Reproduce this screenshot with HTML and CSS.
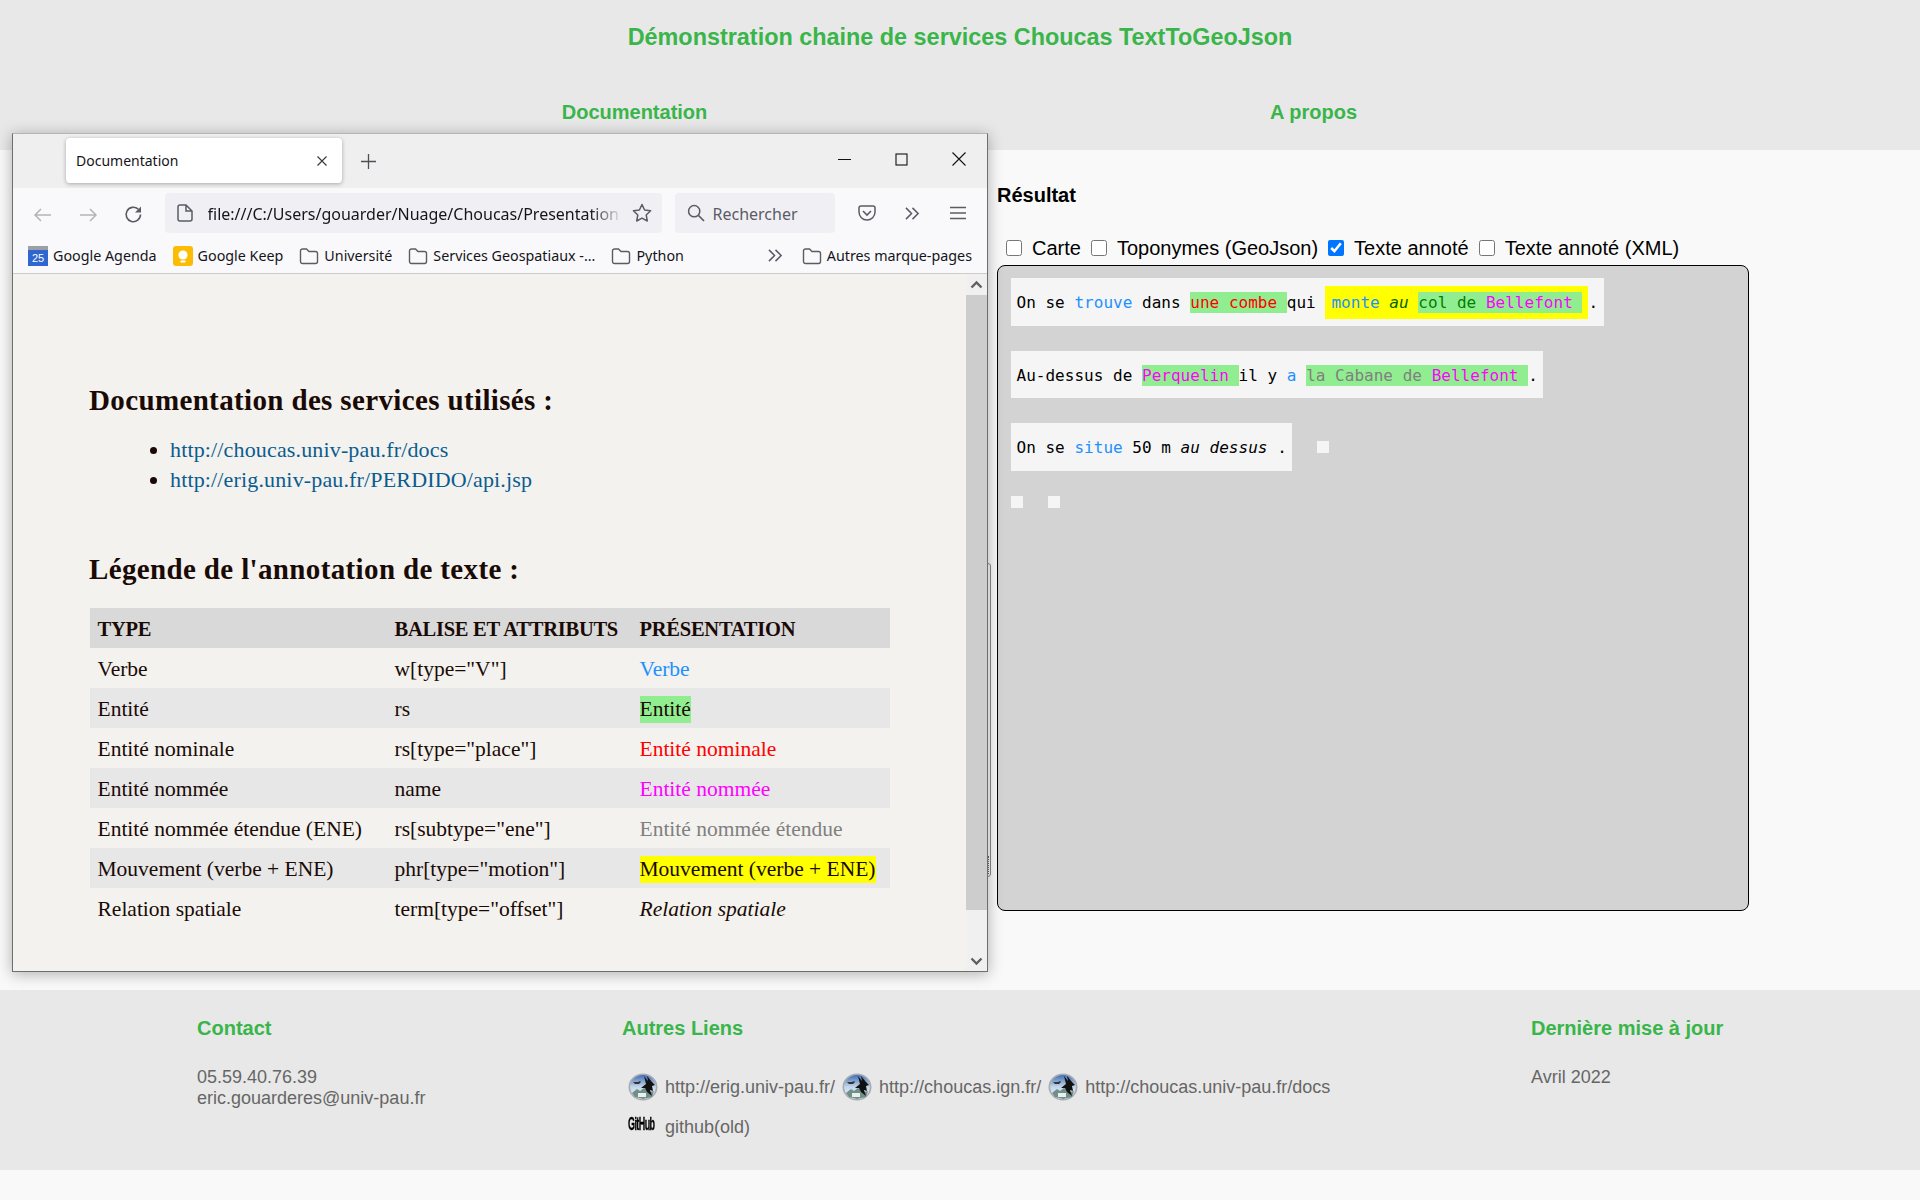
FILE: index.html
```html
<!DOCTYPE html>
<html lang="en">
<head>
    <meta charset="UTF-8">
    <meta name="viewport" content="width=device-width, initial-scale=1.0">
    <title>Démonstration chaine de services Choucas TextToGeoJson</title>
    <link rel="stylesheet" href="styles.css">
</head>
<body>
    <svg class="defs" width="0" height="0">
        <defs>
            <linearGradient id="sky" x1="0" y1="0" x2="0" y2="1">
                <stop offset="0" stop-color="#3f6fb5"/>
                <stop offset="0.5" stop-color="#c5d6ea"/>
                <stop offset="1" stop-color="#eef2f2"/>
            </linearGradient>
            <symbol id="bird-logo" viewBox="0 0 30 28">
                <ellipse cx="15" cy="14" rx="14.5" ry="13.5" fill="#a9adb3"/>
                <ellipse cx="15" cy="14" rx="12.8" ry="12" fill="url(#sky)"/>
                <path d="M4 20 L9 16 L12 18 L16 15 L22 19 L26 18 L24 24 L15 26 L7 24 Z" fill="#6f8f8a"/>
                <path d="M10 20 h8 v4 h-8 Z" fill="#eceee9"/>
                <path d="M5 9 h5 l2 -1 l1 1 l-2 2 h-4 Z" fill="#30343a"/>
                <path d="M16 3 L20 8 L19 3 L24 9 L27 12 L24 13 L25 18 L22 17 L24 23 L19 19 L17 15 L13 15 L18 11 Z" fill="#111"/>
            </symbol>
            <symbol id="folder" viewBox="0 0 20 18">
                <path d="M1.5 4 a2 2 0 0 1 2 -2 h4 l2.5 2.5 h6.5 a2 2 0 0 1 2 2 v8 a2 2 0 0 1 -2 2 h-13 a2 2 0 0 1 -2 -2 Z" fill="none" stroke="#5b5b66" stroke-width="1.4"/>
            </symbol>
            <symbol id="chevrons" viewBox="0 0 18 16">
                <path d="M2 2 L8 8 L2 14 M9 2 L15 8 L9 14" fill="none" stroke="#5b5b66" stroke-width="1.6"/>
            </symbol>
        </defs>
    </svg>

    <header class="site-header">
        <h1>Démonstration chaine de services Choucas TextToGeoJson</h1>
        <div class="site-nav">
            <a href="#">Documentation</a>
            <a href="#">A propos</a>
        </div>
    </header>

    <main class="content">
        <h2>Résultat</h2>
        <div class="options">
            <label><input type="checkbox"> Carte</label>
            <label><input type="checkbox"> Toponymes (GeoJson)</label>
            <label><input type="checkbox" checked> Texte annoté</label>
            <label><input type="checkbox"> Texte annoté (XML)</label>
        </div>
        <div class="result">
            <div class="result-row">
                <div class="sentence">On se <span class="verb">trouve</span> dans <span class="entity"><span class="nominal">une combe</span> </span>qui <span class="motion"><span class="verb">monte</span> <em class="offset-green">au</em> <span class="entity"><span class="green">col de</span> <span class="named">Bellefont</span> </span></span>.</div>
            </div>
            <div class="result-row">
                <div class="sentence sentence-short">Au-dessus de <span class="entity"><span class="named">Perquelin</span> </span>il y <span class="verb">a</span> <span class="entity"><span class="extended">la Cabane de</span> <span class="named">Bellefont</span> </span>.</div>
            </div>
            <div class="result-row">
                <div class="sentence">On se <span class="verb">situe</span> 50 m <em>au dessus</em> .</div>
                <div class="empty-box"></div>
            </div>
            <div class="result-row">
                <div class="empty-box"></div>
                <div class="empty-box"></div>
            </div>
        </div>
    </main>

    <footer class="site-footer">
        <div class="footer-contact">
            <h3>Contact</h3>
            <p>05.59.40.76.39<br>eric.gouarderes@univ-pau.fr</p>
        </div>
        <div class="footer-links">
            <h3>Autres Liens</h3>
            <div class="link-row">
                <svg class="bird"><use href="#bird-logo"/></svg>
                <a href="#">http://erig.univ-pau.fr/</a>
                <svg class="bird"><use href="#bird-logo"/></svg>
                <a href="#">http://choucas.ign.fr/</a>
                <svg class="bird"><use href="#bird-logo"/></svg>
                <a href="#">http://choucas.univ-pau.fr/docs</a>
            </div>
            <div class="link-row github-row">
                <span class="github-slot"><span class="github-logo">GitHub</span></span>
                <a href="#">github(old)</a>
            </div>
        </div>
        <div class="footer-update">
            <h3>Dernière mise à jour</h3>
            <p>Avril 2022</p>
        </div>
    </footer>

    <div class="resize-handle"></div>

    <div class="browser">
        <div class="tab-bar">
            <div class="tab">
                <span>Documentation</span>
                <svg width="10" height="10" viewBox="0 0 10 10"><path d="M0.5 0.5 L9.5 9.5 M9.5 0.5 L0.5 9.5" stroke="#3c3c42" stroke-width="1.2"/></svg>
            </div>
            <svg class="new-tab" width="15" height="15" viewBox="0 0 15 15"><path d="M7.5 0 V15 M0 7.5 H15" stroke="#4f4f57" stroke-width="1.3"/></svg>
            <div class="window-buttons">
                <svg width="13" height="13" viewBox="0 0 13 13"><path d="M0 6.5 H13" stroke="#111" stroke-width="1"/></svg>
                <svg width="13" height="13" viewBox="0 0 13 13"><rect x="1" y="1" width="11" height="11" fill="none" stroke="#111" stroke-width="1.1"/></svg>
                <svg width="14" height="14" viewBox="0 0 14 14"><path d="M0.5 0.5 L13.5 13.5 M13.5 0.5 L0.5 13.5" stroke="#111" stroke-width="1.1"/></svg>
            </div>
        </div>

        <div class="toolbar">
            <div class="tool-btn nav-btn">
                <svg width="19" height="16" viewBox="0 0 19 16"><path d="M18 8 H2 M8 2 L2 8 L8 14" fill="none" stroke="#b4b4b8" stroke-width="1.5"/></svg>
            </div>
            <div class="tool-btn nav-btn">
                <svg width="19" height="16" viewBox="0 0 19 16"><path d="M1 8 H17 M11 2 L17 8 L11 14" fill="none" stroke="#b4b4b8" stroke-width="1.5"/></svg>
            </div>
            <div class="tool-btn nav-btn">
                <svg width="19" height="19" viewBox="0 0 19 19"><path d="M16.5 9.5 A7.2 7.2 0 1 1 14.2 4.2" fill="none" stroke="#5b5b66" stroke-width="1.6"/><path d="M17 1.5 V7.5 H11 Z" fill="#5b5b66"/></svg>
            </div>
            <div class="url-bar">
                <svg width="16" height="18" viewBox="0 0 16 18"><path d="M1 3 a2 2 0 0 1 2 -2 h6 l6 6 v8 a2 2 0 0 1 -2 2 h-10 a2 2 0 0 1 -2 -2 Z M9 1 v6 h6" fill="none" stroke="#5b5b66" stroke-width="1.5"/></svg>
                <span class="url-text">file:///C:/Users/gouarder/Nuage/Choucas/Presentation</span>
                <svg width="20" height="20" viewBox="0 0 20 20"><path d="M10 1.5 L12.6 7 L18.6 7.8 L14.2 12 L15.3 18 L10 15.1 L4.7 18 L5.8 12 L1.4 7.8 L7.4 7 Z" fill="none" stroke="#5b5b66" stroke-width="1.5" stroke-linejoin="round"/></svg>
            </div>
            <div class="search-bar">
                <svg width="18" height="18" viewBox="0 0 18 18"><circle cx="7.2" cy="7.2" r="5.6" fill="none" stroke="#5b5b66" stroke-width="1.5"/><path d="M11.5 11.5 L17 17" stroke="#5b5b66" stroke-width="1.7"/></svg>
                <span>Rechercher</span>
            </div>
            <div class="tool-btn first-right">
                <svg width="18" height="16" viewBox="0 0 18 16"><path d="M1 3 a2 2 0 0 1 2 -2 h12 a2 2 0 0 1 2 2 v4 a8 8 0 0 1 -16 0 Z" fill="none" stroke="#5b5b66" stroke-width="1.5"/><path d="M5 6 L9 10 L13 6" fill="none" stroke="#5b5b66" stroke-width="1.6"/></svg>
            </div>
            <div class="tool-btn">
                <svg width="17" height="15"><use href="#chevrons"/></svg>
            </div>
            <div class="tool-btn">
                <svg width="16" height="14" viewBox="0 0 16 14"><path d="M0 1.5 H16 M0 7 H16 M0 12.5 H16" stroke="#5b5b66" stroke-width="1.5"/></svg>
            </div>
        </div>

        <div class="bookmarks">
            <div class="bookmark">
                <svg width="20" height="20" viewBox="0 0 20 20"><rect x="0" y="1" width="20" height="19" fill="#2f66d0"/><rect x="0" y="0" width="20" height="4" fill="#9aa0a6"/><text x="10" y="16" text-anchor="middle" class="cal-day">25</text></svg>
                <span>Google Agenda</span>
            </div>
            <div class="bookmark">
                <svg width="20" height="20" viewBox="0 0 20 20"><rect width="20" height="20" rx="3" fill="#fbbc04"/><circle cx="10" cy="9" r="4.6" fill="#fff"/><rect x="7.5" y="14.5" width="5" height="2" fill="#fff"/></svg>
                <span>Google Keep</span>
            </div>
            <div class="bookmark"><svg width="20" height="18"><use href="#folder"/></svg><span>Université</span></div>
            <div class="bookmark"><svg width="20" height="18"><use href="#folder"/></svg><span>Services Geospatiaux -...</span></div>
            <div class="bookmark"><svg width="20" height="18"><use href="#folder"/></svg><span>Python</span></div>
            <svg class="more-bookmarks" width="17" height="15"><use href="#chevrons"/></svg>
            <div class="bookmark"><svg width="20" height="18"><use href="#folder"/></svg><span>Autres marque-pages</span></div>
        </div>

        <div class="browser-view">
            <div class="doc">
                <h2>Documentation des services utilisés :</h2>
                <ul>
                    <li><a href="#">http://choucas.univ-pau.fr/docs</a></li>
                    <li><a href="#">http://erig.univ-pau.fr/PERDIDO/api.jsp</a></li>
                </ul>
                <h2 class="legend-title">Légende de l'annotation de texte :</h2>
                <table>
                    <thead>
                        <tr><th>TYPE</th><th>BALISE ET ATTRIBUTS</th><th>PRÉSENTATION</th></tr>
                    </thead>
                    <tbody>
                        <tr><td>Verbe</td><td>w[type="V"]</td><td><span class="verb">Verbe</span></td></tr>
                        <tr><td>Entité</td><td>rs</td><td><span class="entity mark">Entité</span></td></tr>
                        <tr><td>Entité nominale</td><td>rs[type="place"]</td><td><span class="nominal">Entité nominale</span></td></tr>
                        <tr><td>Entité nommée</td><td>name</td><td><span class="named">Entité nommée</span></td></tr>
                        <tr><td>Entité nommée étendue (ENE)</td><td>rs[subtype="ene"]</td><td><span class="extended">Entité nommée étendue</span></td></tr>
                        <tr><td>Mouvement (verbe + ENE)</td><td>phr[type="motion"]</td><td><span class="yellow mark">Mouvement (verbe + ENE)</span></td></tr>
                        <tr><td>Relation spatiale</td><td>term[type="offset"]</td><td><em>Relation spatiale</em></td></tr>
                    </tbody>
                </table>
            </div>
            <div class="scrollbar">
                <div class="scroll-btn">
                    <svg width="13" height="9" viewBox="0 0 13 9"><path d="M1.5 7.5 L6.5 2.5 L11.5 7.5" fill="none" stroke="#606060" stroke-width="2.4"/></svg>
                </div>
                <div class="scroll-thumb"></div>
                <div class="scroll-rest">
                    <svg width="13" height="9" viewBox="0 0 13 9"><path d="M1.5 1.5 L6.5 6.5 L11.5 1.5" fill="none" stroke="#606060" stroke-width="2.4"/></svg>
                </div>
            </div>
        </div>
    </div>
</body>
</html>
```

FILE: styles.css
```css
* {
    margin: 0;
    padding: 0;
    box-sizing: border-box;
}

body {
    background-color: #f9f9f9;
    font-family: 'Liberation Sans', Arial, sans-serif;
    height: 1200px;
    overflow: hidden;
    position: relative;
}

.defs {
    position: absolute;
}

a {
    text-decoration: none;
}

/* page header */
.site-header {
    background-color: #e8e8e8;
    height: 150px;
    padding-top: 23px;
}

.site-header h1 {
    color: #39b54a;
    font-size: 23.4px;
    line-height: 28px;
    text-align: center;
}

.site-nav {
    display: grid;
    grid-template-columns: 679px 679px;
    margin-top: 49px;
    padding-left: 295px;
}

.site-nav a {
    color: #39b54a;
    font-size: 20px;
    font-weight: bold;
    line-height: 24px;
    text-align: center;
}

/* resultat */
.content {
    height: 840px;
    padding: 33px 0 0 997px;
}

.content h2 {
    color: #000;
    font-size: 20px;
    line-height: 24px;
}

.options {
    display: flex;
    align-items: center;
    gap: 10px;
    height: 24px;
    margin-top: 29px;
    padding-left: 9px;
    color: #000;
    font-size: 20px;
}

.options label {
    display: flex;
    align-items: center;
    gap: 10px;
}

.options input {
    width: 16px;
    height: 16px;
    margin: 0;
}

.result {
    display: flex;
    flex-direction: column;
    gap: 25px;
    width: 752px;
    height: 646px;
    margin-top: 5px;
    padding: 12px 13px;
    background-color: #d3d3d3;
    border: 1px solid #000;
    border-radius: 8px;
    font-family: 'DejaVu Sans Mono', monospace;
    font-size: 16px;
    letter-spacing: 0.02px;
}

.result-row {
    display: flex;
    align-items: center;
    gap: 25px;
}

.sentence {
    background-color: #f5f5f5;
    height: 48px;
    line-height: 50px;
    padding: 0 5.5px;
    white-space: pre;
    color: #000;
}

.sentence-short {
    height: 47px;
}

.empty-box {
    background-color: #f5f5f5;
    width: 12px;
    height: 12px;
}

.verb {
    color: #1e90ff;
}

.entity {
    background-color: #90ee90;
    padding: 1px 0;
}

.nominal {
    color: #ff0000;
}

.named {
    color: #ff00ff;
}

.extended {
    color: #808080;
}

.green {
    color: #008000;
}

.offset-green {
    color: #006400;
}

.motion {
    background-color: #ffff00;
    padding: 7px 6px;
}

.yellow {
    background-color: #ffff00;
}

/* page footer */
.site-footer {
    display: flex;
    background-color: #e8e8e8;
    height: 180px;
    padding: 26px 0 0 197px;
    color: #666;
    font-size: 18px;
}

.site-footer h3 {
    color: #39b54a;
    font-size: 20px;
    line-height: 24px;
}

.site-footer p {
    line-height: 21px;
}

.footer-contact {
    width: 425px;
}

.footer-contact p {
    margin-top: 27px;
}

.footer-links {
    width: 909px;
}

.footer-update p {
    margin-top: 27px;
}

.link-row {
    display: flex;
    align-items: center;
    gap: 7px;
    height: 30px;
    margin-top: 32px;
    padding-left: 6px;
}

.link-row a {
    color: #666;
}

.bird {
    width: 30px;
    height: 28px;
}

.github-row {
    margin-top: 10px;
    gap: 11px;
}

.github-slot {
    width: 26px;
}

.github-logo {
    display: block;
    width: 26px;
    margin-top: -6px;
    color: #000;
    font-weight: bold;
    font-size: 16px;
    line-height: 18px;
    letter-spacing: -1px;
    -webkit-text-stroke: 0.3px #000;
    transform: scale(0.56, 1.15);
    transform-origin: left center;
    white-space: nowrap;
}

/* the screenshot of firefox lying over the page */
.resize-handle {
    position: absolute;
    left: 986px;
    top: 563px;
    width: 5px;
    height: 314px;
    border: 1px solid #8a8a8a;
    border-radius: 0 3px 3px 0;
}

.resize-handle::after {
    content: "";
    position: absolute;
    left: 1px;
    bottom: 2px;
    height: 18px;
    border-left: 1px dotted #666;
}

.browser {
    position: absolute;
    left: 12px;
    top: 133px;
    width: 976px;
    height: 839px;
    display: flex;
    flex-direction: column;
    background-color: #f9f9fb;
    border: 1px solid #6e6e6e;
    border-top-color: #b5b5b5;
    box-shadow: 0 2px 14px rgba(0, 0, 0, 0.3);
    font-family: 'Noto Sans', sans-serif;
    color: #15141a;
}

.tab-bar {
    display: flex;
    align-items: flex-start;
    height: 54px;
    padding: 4px 0 0 53px;
    background-color: #efeff0;
}

.tab {
    display: flex;
    align-items: center;
    justify-content: space-between;
    width: 276px;
    height: 45px;
    padding: 0 15px 0 10px;
    background-color: #fff;
    border-radius: 4px;
    box-shadow: 0 1px 4px rgba(0, 0, 0, 0.3);
    font-size: 14px;
}

.new-tab {
    margin: 16px 0 0 19px;
}

.window-buttons {
    display: flex;
    align-items: center;
    gap: 44px;
    height: 42px;
    margin-left: auto;
    padding-right: 21px;
}

.toolbar {
    display: flex;
    align-items: center;
    height: 52px;
    padding: 5px 0 7px 7px;
}

.tool-btn {
    display: flex;
    align-items: center;
    justify-content: center;
    width: 45.5px;
    height: 40px;
}

.nav-btn {
    padding-top: 3px;
}

.first-right {
    margin-left: 10px;
}

.url-bar {
    display: flex;
    align-items: center;
    width: 497px;
    height: 40px;
    margin-left: 8px;
    padding: 0 10px 0 12px;
    background-color: #f0f0f4;
    border-radius: 4px;
}

.url-text {
    flex: 1;
    margin: 2px 9px 0 15px;
    overflow: hidden;
    white-space: nowrap;
    font-size: 16px;
    -webkit-mask-image: linear-gradient(to right, #000 92%, transparent);
    mask-image: linear-gradient(to right, #000 92%, transparent);
}

.search-bar {
    display: flex;
    align-items: center;
    gap: 8px;
    width: 160px;
    height: 40px;
    margin-left: 13px;
    padding-left: 12px;
    background-color: #f0f0f4;
    border-radius: 4px;
    color: #5b5b66;
    font-size: 16px;
}

.search-bar span {
    margin-top: 2px;
}

.bookmarks {
    display: flex;
    align-items: center;
    gap: 16px;
    height: 34px;
    padding: 0 15px 2px;
    border-bottom: 1px solid #ccc;
    font-size: 14.3px;
}

.bookmark {
    display: flex;
    align-items: center;
    gap: 5px;
    white-space: nowrap;
}

.cal-day {
    fill: #fff;
    font-size: 11px;
    font-family: 'Liberation Sans', sans-serif;
}

.more-bookmarks {
    margin-left: auto;
    margin-right: 2px;
}

.browser-view {
    display: flex;
    flex: 1;
    min-height: 0;
    background-color: #f3f2ee;
}

.doc {
    flex: 1;
    padding: 108px 0 0 76px;
    font-family: 'Liberation Serif', serif;
    color: #1a0a05;
}

.doc h2 {
    font-size: 29px;
    line-height: 36px;
    letter-spacing: 0.36px;
}

.doc ul {
    margin-top: 17px;
    padding-left: 81px;
    font-size: 22px;
    line-height: 30px;
    letter-spacing: 0.15px;
}

.doc a {
    color: #0b5c8f;
}

.doc .legend-title {
    margin-top: 56px;
}

.doc table {
    width: 800px;
    margin: 21px 0 0 1px;
    border-collapse: collapse;
    table-layout: fixed;
    font-size: 21.5px;
}

.doc th,
.doc td {
    height: 40px;
    padding: 2px 0 0 7.5px;
    text-align: left;
    white-space: nowrap;
}

.doc th {
    font-size: 20.5px;
    letter-spacing: -0.25px;
}

.doc th:nth-child(1) {
    width: 297px;
}

.doc th:nth-child(2) {
    width: 245px;
}

.doc thead tr {
    background-color: #d9d9d9;
}

.doc tbody tr:nth-child(even) {
    background-color: #e7e7e7;
}

.mark {
    display: inline-block;
    line-height: 27px;
    padding: 0;
}

.scrollbar {
    display: flex;
    flex-direction: column;
    width: 21px;
    background-color: #f0f0f0;
}

.scroll-btn {
    display: flex;
    align-items: center;
    justify-content: center;
    height: 21px;
}

.scroll-thumb {
    height: 615px;
    background-color: #cdcdcd;
}

.scroll-rest {
    display: flex;
    flex: 1;
    align-items: flex-end;
    justify-content: center;
    padding-bottom: 5px;
}
```
